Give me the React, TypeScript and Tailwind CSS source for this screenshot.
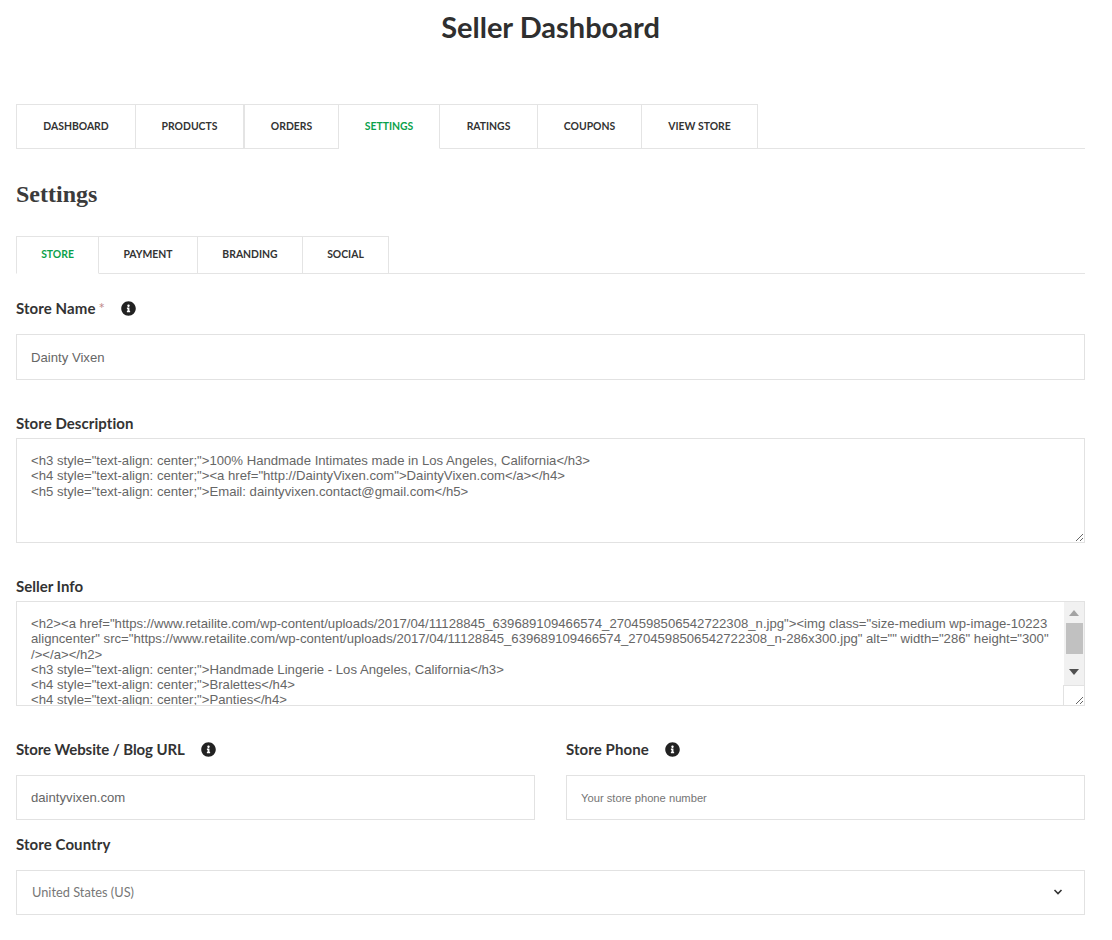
import { FaInfoCircle } from "react-icons/fa";

const mainTabs = [
  { label: "DASHBOARD", w: "w-[120px]" },
  { label: "PRODUCTS", w: "w-[108px]" },
  { label: "ORDERS", w: "w-[95px]", left: true },
  { label: "SETTINGS", w: "w-[101px]", active: true },
  { label: "RATINGS", w: "w-[98px]" },
  { label: "COUPONS", w: "w-[104px]" },
  { label: "VIEW STORE", w: "w-[116px]" },
];

const subTabs = [
  { label: "STORE", w: "w-[83px]", active: true },
  { label: "PAYMENT", w: "w-[99px]" },
  { label: "BRANDING", w: "w-[105px]" },
  { label: "SOCIAL", w: "w-[86px]" },
];

const description = `<h3 style="text-align: center;">100% Handmade Intimates made in Los Angeles, California</h3>
<h4 style="text-align: center;"><a href="http://DaintyVixen.com">DaintyVixen.com</a></h4>
<h5 style="text-align: center;">Email: daintyvixen.contact@gmail.com</h5>`;

const sellerInfo = `<h2><a href="https://www.retailite.com/wp-content/uploads/2017/04/11128845_639689109466574_2704598506542722308_n.jpg"><img class="size-medium wp-image-10223 aligncenter" src="https://www.retailite.com/wp-content/uploads/2017/04/11128845_639689109466574_2704598506542722308_n-286x300.jpg" alt="" width="286" height="300" /></a></h2>
<h3 style="text-align: center;">Handmade Lingerie - Los Angeles, California</h3>
<h4 style="text-align: center;">Bralettes</h4>
<h4 style="text-align: center;">Panties</h4>
<h4 style="text-align: center;">Bodysuits</h4>`;

function Tabs({
  items,
  height,
}: {
  items: { label: string; w: string; active?: boolean; left?: boolean }[];
  height: string;
}) {
  return (
    <div className={`flex border-b border-[#e4e4e4] ${height}`}>
      {items.map((t, i) => (
        <div
          key={t.label}
          className={`${t.w} -mb-px flex items-center justify-center border-y border-r border-[#e4e4e4] text-[10.4px] font-bold ${
            i === 0 || t.left ? "border-l" : ""
          } ${t.active ? "border-b-white text-[#0ba14b]" : "text-[#333333]"}`}
        >
          {t.label}
        </div>
      ))}
    </div>
  );
}

function Label({ text, required, info, className }: { text: string; required?: boolean; info?: boolean; className: string }) {
  return (
    <div className={`flex items-center text-[15px] font-bold leading-[20px] text-[#333333] ${className}`}>
      <span>{text}</span>
      {required && <span className="ml-[3px] font-normal text-[#c08a8a]">*</span>}
      {info && <FaInfoCircle className="ml-[16px] text-[15px] text-[#222222]" />}
    </div>
  );
}

const boxed = "w-full border border-[#e2e2e2] bg-white px-[14px] outline-none font-['Liberation_Sans',sans-serif] text-[#666666]";

export default function App() {
  return (
    <div className="h-[940px] w-[1101px] overflow-hidden bg-white px-[16px] font-['Lato',sans-serif]">
      <h1 className="pt-[9px] text-center text-[29px] font-bold leading-[36px] text-[#2f2f2f]">Seller Dashboard</h1>
      <div className="mt-[59px]">
        <Tabs items={mainTabs} height="h-[45px]" />
      </div>
      <h2 className="mt-[31px] font-['Liberation_Serif',serif] text-[24px] font-bold leading-[28px] text-[#3b3b3b]">Settings</h2>
      <div className="mt-[28px]">
        <Tabs items={subTabs} height="h-[38px]" />
      </div>

      <Label text="Store Name" required info className="mt-[24px] tracking-[0.09px]" />
      <input readOnly value="Dainty Vixen" className={`${boxed} mt-[16px] block h-[46px] text-[13.15px]`} />

      <Label text="Store Description" className="mt-[33px] tracking-[0.06px]" />
      <textarea
        readOnly
        defaultValue={description}
        className={`${boxed} mt-[5px] block h-[105px] resize-y overflow-hidden py-[14px] text-[13.15px] leading-[15.3px]`}
      />

      <Label text="Seller Info" className="mt-[33px]" />
      <div className="relative mt-[5px] h-[105px]">
        <textarea
          readOnly
          defaultValue={sellerInfo}
          className={`${boxed} block h-[105px] resize-y overflow-hidden pt-[14px] pr-[32px] pb-0 text-[13.15px] leading-[15.3px]`}
        />
        <div className="absolute right-px top-px flex h-[83px] w-[20px] flex-col items-center bg-[#f1f1f1]">
          <svg width="10" height="6" viewBox="0 0 10 6" className="mt-[8px]"><path d="M5 0 L10 6 L0 6 Z" fill="#a3a3a3" /></svg>
          <div className="mt-[7px] h-[31px] w-[17px] bg-[#c1c1c1]" />
          <svg width="10" height="6" viewBox="0 0 10 6" className="mt-[15px]"><path d="M0 0 L10 0 L5 6 Z" fill="#505050" /></svg>
        </div>
        <div className="pointer-events-none absolute bottom-[1px] right-[1px] h-[20px] w-[21px] border-l border-t border-[#e2e2e2]" />
      </div>

      <div className="mt-[33px] grid grid-cols-2 gap-x-[31px]">
        <div>
          <Label text="Store Website / Blog URL" info className="tracking-[-0.08px]" />
          <input readOnly value="daintyvixen.com" className={`${boxed} mt-[16px] block h-[45px] text-[13.15px]`} />
        </div>
        <div>
          <Label text="Store Phone" info className="tracking-[0.09px]" />
          <input readOnly placeholder="Your store phone number" className={`${boxed} mt-[16px] block h-[45px] text-[11.2px] placeholder:text-[#757575]`} />
        </div>
      </div>

      <Label text="Store Country" className="mt-[14px] tracking-[0.08px]" />
      <div className="mt-[16px] flex h-[45px] items-center justify-between border border-[#e2e2e2] pl-[15px] pr-[21px] text-[12.8px] text-[#777777]">
        <span>United States (US)</span>
        <svg width="10" height="6" viewBox="0 0 10 6" fill="none" stroke="#333333" strokeWidth="1.6" className="-mt-[2px]"><path d="M1.5 1 L5 4.5 L8.5 1" /></svg>
      </div>
    </div>
  );
}
